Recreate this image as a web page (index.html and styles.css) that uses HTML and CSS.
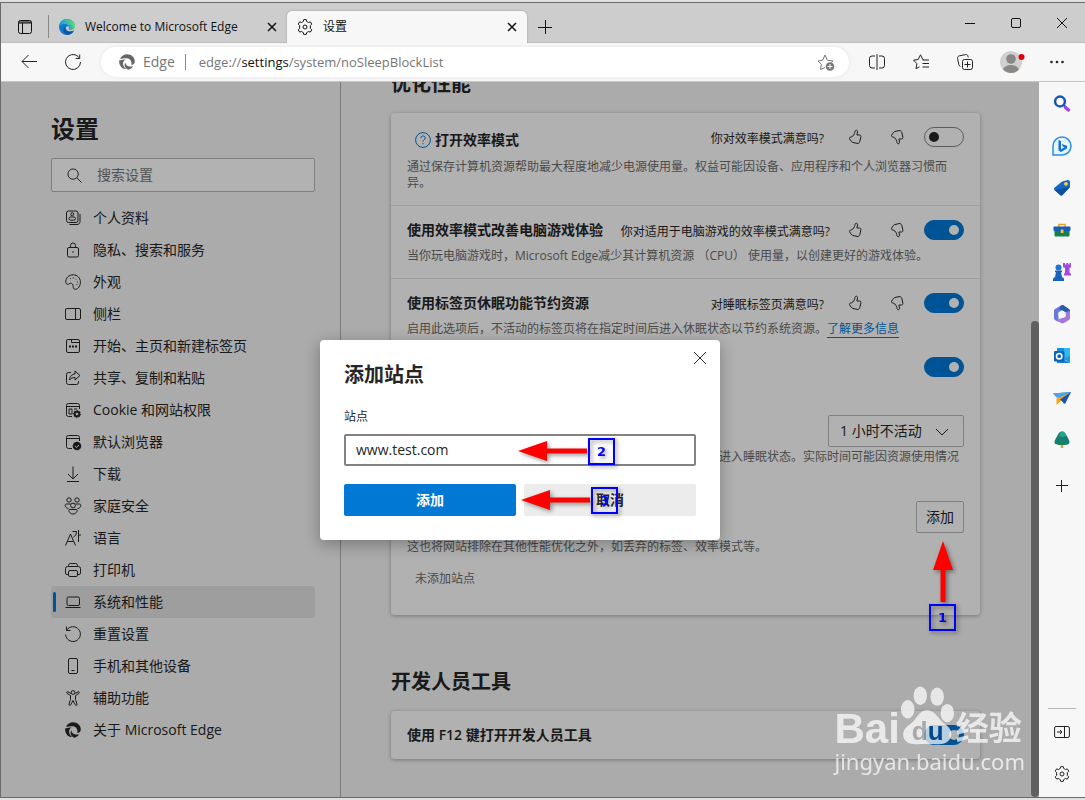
FILE: index.html
```html
<!DOCTYPE html>
<html lang="zh-CN">
<head>
    <meta charset="UTF-8">
    <meta name="viewport" content="width=device-width, initial-scale=1.0">
    <title>设置</title>
    <link rel="stylesheet" href="styles.css">
</head>
<body>
    <!-- 공통 아이콘 -->
    <svg class="defs" aria-hidden="true">
        <symbol id="gear" viewBox="0 0 16 16">
            <path d="M6.7.7q1.300-.3 2.600 0l.5 1.900q.9.300 1.600.9l1.900-.6q.9 1 1.400 2.300L13.300 6.600q.2 1.400 0 2.800l1.400 1.400q-.5 1.300-1.400 2.300l-1.900-.6q-.7.6-1.600.9l-.5 1.900q-1.300.3-2.600 0l-.5-1.900q-.9-.3-1.600-.9l-1.900.6q-.9-1-1.400-2.300l1.400-1.400q-.2-1.400 0-2.800L1.300 5.200q.5-1.300 1.400-2.300l1.900.6q.7-.6 1.600-.9z"/>
            <circle cx="8" cy="8" r="2"/>
        </symbol>
        <symbol id="swirl" viewBox="0 0 16 16">
            <path fill="currentColor" stroke="none" d="M1 4.800C2.500 1.800 5.200.2 8 .2c4.600 0 8 3.500 7.800 7.300-.1 2-1.500 3.400-3.500 3.500.9-2.900-.8-6.400-4.500-6.800C5.200 3.900 2.700 5 1 4.800z"/>
            <path fill="currentColor" stroke="none" d="M.3 6.200c1.800.5 4-.8 6.300-.6C4.100 7 3.500 9.700 4.600 12c.6 1.300 1.500 2.200 2.500 3.100C2.900 15.200-.6 10.700.3 6.200z"/>
            <path fill="currentColor" stroke="none" d="M6.500 8.300c-.3 2.700 2.600 5 7.800 4-1.400 2-3 3-4.900 3.500-3.500-1.300-4.900-5.200-2.900-7.500z"/>
        </symbol>
        <symbol id="thumb" viewBox="0 0 16 16">
            <path d="M9.200 1.200c.9 0 1.500.8 1.300 1.800L9.900 6h2.600c1 0 1.600.8 1.400 1.700l-1.100 4.900c-.3 1.300-1.500 2.100-2.800 1.800l-4.300-1c-.6-.1-1-.5-1.300-1l-1.700-2.400c-.5-.8-.2-1.700.8-1.900 2-.3 3.100-1.700 3.900-3.400.6-1.300.5-3.500 1.800-3.500z"/>
        </symbol>
    </svg>

    <div class="window">
        <header class="tabbar">
            <button class="tool tabs-menu" aria-label="标签页操作"><svg viewBox="0 0 16 16"><rect x="1.5" y="1.5" width="13" height="13" rx="2"/><path d="M1.5 3h13M2 4h12M5.5 4v10"/></svg></button>
            <div class="tab">
                <svg class="tab-icon edge" viewBox="0 0 16 16">
                    <defs>
                        <linearGradient id="ea" x1="0" y1="0" x2="1" y2="0"><stop offset="0" stop-color="#159ce0"/><stop offset="1" stop-color="#62dd6a"/></linearGradient>
                    </defs>
                    <circle cx="8" cy="8" r="8" fill="#1277cf"/>
                    <path fill="url(#ea)" d="M.4 7C1 2.800 4 0 8 0c4.500 0 8 3.200 8 7 0 2.500-1.800 3.900-4 3.900-1.700 0-3-.6-2.300-1.500C11 7.500 9 4.900 6 4.900 3.500 4.900 1.500 5.700.4 7z"/>
                    <path fill="#0c55a0" d="M5.900 7.500c-1.200 3.400 2.600 6.300 8.800 4.600-1.200 2-3.200 3.400-5.600 3.800-4.500-.4-6.300-5.700-3.200-8.400z"/>
                    <path fill="#cdcdcd" d="M8.400 7.200c-2.400.8-1.800 4.800 2.300 5 2 .1 3.500-.4 5-1.200-.7 1.700-1.600 3-2.900 4L16 16V9.500z"/>
                    <path fill="url(#ea)" d="M9.500 5.200 16 7c0 2.500-1.800 3.900-4 3.900-1.700 0-3-.6-2.300-1.500.9-1.300.7-2.800-.2-4.200z"/>
                </svg>
                <span>Welcome to Microsoft Edge</span>
                <button class="tab-close" aria-label="关闭"><svg viewBox="0 0 10 10"><path d="M1 1l8 8M9 1L1 9"/></svg></button>
            </div>
            <div class="tab active">
                <svg class="tab-icon" viewBox="0 0 16 16"><use href="#gear"/></svg>
                <span>设置</span>
                <button class="tab-close" aria-label="关闭"><svg viewBox="0 0 10 10"><path d="M1 1l8 8M9 1L1 9"/></svg></button>
            </div>
            <button class="tool new-tab" aria-label="新建标签页"><svg viewBox="0 0 14 14"><path d="M7.500 0v14M0 7.500h14"/></svg></button>
            <div class="win-buttons">
                <button aria-label="最小化"><svg viewBox="0 0 10 10"><path d="M0 5.500h10"/></svg></button>
                <button aria-label="最大化"><svg viewBox="0 0 10 10"><rect x=".5" y=".5" width="9" height="9" rx="1.5"/></svg></button>
                <button aria-label="关闭窗口"><svg viewBox="0 0 10 10"><path d="M0 0l10 10M10 0L0 10"/></svg></button>
            </div>
        </header>

        <div class="toolbar">
            <button class="tool" aria-label="返回"><svg viewBox="0 0 16 16"><path d="M16 7.500H1M7.500 1L1 7.500 7.500 14"/></svg></button>
            <button class="tool" aria-label="刷新"><svg viewBox="0 0 16 16"><path d="M15.500 8A7.500 7.500 0 1 1 13 2.400l1.500 1.800M14.700.5v4h-4"/></svg></button>
            <div class="address">
                <svg class="swirl" viewBox="0 0 16 16"><use href="#swirl"/></svg>
                <span class="site">Edge</span>
                <div class="url" role="textbox" contenteditable="true" aria-label="地址栏">edge://<b>settings</b>/system/noSleepBlockList</div>
                <button class="star" aria-label="收藏"><svg viewBox="0 0 18 18"><path d="M8 14.500l-4.500 2 .9-5L1 8l4.600-.8L8 2l2.300 5.200 5.700.8-1.500 1.500"/><circle class="fill" cx="13" cy="13.500" r="4.300"/><path class="white" d="M13 11v5M10.500 13.500h5"/></svg></button>
            </div>
            <div class="actions">
                <button class="tool" aria-label="拆分窗口"><svg viewBox="0 0 16 16"><path d="M6 2H3A2.500 2.500 0 0 0 .5 4.500v7A2.500 2.500 0 0 0 3 14h3M10 2h3a2.500 2.500 0 0 1 2.500 2.500v7A2.500 2.500 0 0 1 13 14h-3M8 0v16"/></svg></button>
                <button class="tool" aria-label="收藏夹"><svg viewBox="0 0 16 16"><path d="M10.500 5.500H9.800L7.500.8 5.200 5.500.5 6.200l3.400 3.500-.9 5 3.500-1.900M9.500 6h6.500M9.500 9.500H16M9.500 13H16"/></svg></button>
                <button class="tool" aria-label="集锦"><svg viewBox="0 0 16 16"><rect x="5.5" y="5.5" width="10" height="10" rx="2"/><path d="M10.500 7.500v6M7.500 10.500h6M3.500 12.500C2.500 12 2 11.500 1.800 10.500L.6 4.500C.4 3 1 2 2.500 1.800l6-1.200c1.400-.2 2.300.5 2.500 1.900l.2 1"/></svg></button>
                <button class="tool profile" aria-label="个人资料"><svg viewBox="0 0 24 24"><circle cx="12" cy="12" r="11" fill="#d2d0ce"/><circle cx="12" cy="9" r="4.800" fill="#8a8886"/><path d="M4 19.500c2-6 14-6 16 0a11 11 0 0 1-16 0z" fill="#8a8886"/><circle cx="22.500" cy="7" r="3" fill="#e3000b"/></svg></button>
                <button class="tool dots" aria-label="设置及其他"><svg viewBox="0 0 16 16"><circle cx="2.500" cy="8" r="1.300"/><circle cx="8" cy="8" r="1.300"/><circle cx="13.500" cy="8" r="1.300"/></svg></button>
            </div>
        </div>

        <div class="workspace">
            <div class="page">
                <aside class="menu">
                    <h1>设置</h1>
                    <label class="search">
                        <svg viewBox="0 0 16 16"><circle cx="6.500" cy="6.500" r="5.500"/><path d="M10.500 10.500l5 5"/></svg>
                        <input type="search" placeholder="搜索设置" aria-label="搜索设置">
                    </label>
                    <nav>
                        <a href="#"><svg viewBox="0 0 16 16"><rect x="1.5" y="1" width="11.500" height="11.500" rx="2"/><circle cx="7.200" cy="4.300" r="1.500"/><rect x="4" y="7" width="6.500" height="3.200" rx="1.500"/><path d="M15 4v7.500c0 2-1.200 3-3 3H4.500"/></svg>个人资料</a>
                        <a href="#"><svg viewBox="0 0 16 16"><rect x="2.500" y="5.500" width="11" height="9.500" rx="1.500"/><path d="M5.500 5.500v-2a2.500 2.500 0 0 1 5 0v2"/><circle class="fill" cx="8" cy="10" r=".8"/></svg>隐私、搜索和服务</a>
                        <a href="#"><svg viewBox="0 0 16 16"><path d="M.8 8.500C.3 4 4 .8 8.200.8c4 0 7 3 7.200 6.900.2 4-2.200 7.700-5 7.500-3.300-.3-1.400-3-3-5.200-1.500-2-3.500.7-5.200.2-.8-.2-1.300-.8-1.400-1.700z"/><path stroke-dasharray="1 2" d="M5 5c2-2 5-1.500 6.500 1s1 4-.5 6"/></svg>外观</a>
                        <a href="#"><svg viewBox="0 0 16 16"><rect x=".5" y="2.500" width="15" height="11" rx="1.500"/><path d="M10.500 2.500v11"/></svg>侧栏</a>
                        <a href="#"><svg viewBox="0 0 16 16"><rect x="1.500" y="1.500" width="13" height="13" rx="1.500"/><path d="M6.500 1.500v3h8"/><path stroke-width="2" d="M4 8.500h2M7 8.500h2M10 8.500h2"/></svg>开始、主页和新建标签页</a>
                        <a href="#"><svg viewBox="0 0 16 16"><path d="M6 2.500H3.500a2 2 0 0 0-2 2v8a2 2 0 0 0 2 2h8a2 2 0 0 0 2-2V11"/><path d="M10 1l5 4.500-5 4.500V7.500c-2.500 0-4 .5-5.500 2.500.3-3.500 2.500-6 5.500-6z"/></svg>共享、复制和粘贴</a>
                        <a href="#"><svg viewBox="0 0 16 16"><path d="M7 14.500H3.500a2 2 0 0 1-2-2v-9a2 2 0 0 1 2-2h9a2 2 0 0 1 2 2V7M1.500 4.500h13M7 7H4v5h3zM9 7h3"/><circle cx="12" cy="12" r="2.300" stroke-width="2"/><path stroke-dasharray="1.300 1.400" d="M12 8.300a3.700 3.700 0 1 1-.1 0"/></svg>Cookie 和网站权限</a>
                        <a href="#"><svg viewBox="0 0 16 16"><path d="M7 14.500H3.500a2 2 0 0 1-2-2v-9a2 2 0 0 1 2-2h9a2 2 0 0 1 2 2V7M1.500 4.500h13"/><circle class="fill" cx="12" cy="12" r="4.300"/><path class="cut" d="M10 12l1.500 1.500L14 11"/></svg>默认浏览器</a>
                        <a href="#"><svg viewBox="0 0 16 16"><path d="M8 .5v12M3 8l5 5 5-5M2 15.500h12"/></svg>下载</a>
                        <a href="#"><svg viewBox="0 0 16 16"><circle cx="4" cy="2" r="2.200"/><circle cx="12" cy="2" r="2.200"/><circle cx="8" cy="7.500" r="2.400"/><path d="M5.500 6H1.500c-2.500 0-1.500 4.500 2 4.500M10.500 6h4c2.500 0 1.500 4.500-2 4.500M4.500 11.500h7c1.500 0 .5 4.500-3.500 4.500s-5-4.500-3.500-4.500z"/></svg>家庭安全</a>
                        <a href="#"><svg viewBox="0 0 16 16"><path d="M.5 15.500L5.500 4l5 11.500M2.500 11.500h6M7.500 1.500h4c0 3-1 4.500-3 5.500M13.500 0v12M13.500 5H16"/></svg>语言</a>
                        <a href="#"><svg viewBox="0 0 16 16"><path d="M3.500 4.500v-1a2 2 0 0 1 2-2h5a2 2 0 0 1 2 2v1M3.500 12.500H2A1.500 1.500 0 0 1 .5 11V6.500a2 2 0 0 1 2-2h11a2 2 0 0 1 2 2V11a1.500 1.500 0 0 1-1.500 1.500h-1.500"/><rect x="3.500" y="8.500" width="9" height="6" rx="1.500"/></svg>打印机</a>
                        <a href="#" class="active"><svg viewBox="0 0 16 16"><rect x="2" y="3" width="12.500" height="8.500" rx="1.500"/><path d="M.5 13.500h15"/></svg>系统和性能</a>
                        <a href="#"><svg viewBox="0 0 16 16"><path d="M1.500.5v4h4M1.700 4.200A7.400 7.400 0 1 1 .6 8.500"/></svg>重置设置</a>
                        <a href="#"><svg viewBox="0 0 16 16"><rect x="3.500" y=".5" width="9" height="15" rx="1.500"/><path d="M6.500 12.500h3"/></svg>手机和其他设备</a>
                        <a href="#"><svg viewBox="0 0 16 16"><circle cx="8" cy="2.500" r="1.900"/><path d="M6 3.500L3 1.800c-1.200-.5-2 1-.8 1.700l3.300 2v4L4 14c-.3 1.500 1.300 2 1.800.7L8 10.500l2.200 4.200c.5 1.300 2.100.8 1.800-.7l-1.500-4.500v-4l3.300-2c1.200-.7.4-2.200-.8-1.700l-3 1.700"/></svg>辅助功能</a>
                        <a href="#"><svg viewBox="0 0 16 16"><use href="#swirl"/></svg>关于 Microsoft Edge</a>
                    </nav>
                </aside>

                <main class="content">
                    <h2>优化性能</h2>
                    <section class="card">
                        <div class="row">
                            <div class="head">
                                <label class="title help" for="eco"><svg viewBox="0 0 16 16"><circle cx="8" cy="8" r="7.400"/><path d="M5.800 6.200c0-3 4.400-2.900 4.400-.2C10.200 7.800 8 7.800 8 9.700"/><path d="M8 11v1.300"/></svg>打开效率模式</label>
                                <span class="ask">你对效率模式满意吗?</span>
                                <button class="vote" aria-label="满意"><svg><use href="#thumb"/></svg></button>
                                <button class="vote down" aria-label="不满意"><svg><use href="#thumb"/></svg></button>
                                <input type="checkbox" class="toggle" id="eco">
                            </div>
                            <p>通过保存计算机资源帮助最大程度地减少电源使用量。权益可能因设备、应用程序和个人浏览器习惯而异。</p>
                        </div>
                        <div class="row">
                            <div class="head">
                                <label class="title" for="game">使用效率模式改善电脑游戏体验</label>
                                <span class="ask near">你对适用于电脑游戏的效率模式满意吗?</span>
                                <button class="vote" aria-label="满意"><svg><use href="#thumb"/></svg></button>
                                <button class="vote down" aria-label="不满意"><svg><use href="#thumb"/></svg></button>
                                <input type="checkbox" class="toggle" id="game" checked>
                            </div>
                            <p>当你玩电脑游戏时，Microsoft Edge减少其计算机资源 （CPU） 使用量，以创建更好的游戏体验。</p>
                        </div>
                        <div class="row">
                            <div class="head">
                                <label class="title" for="sleep">使用标签页休眠功能节约资源</label>
                                <span class="ask">对睡眠标签页满意吗?</span>
                                <button class="vote" aria-label="满意"><svg><use href="#thumb"/></svg></button>
                                <button class="vote down" aria-label="不满意"><svg><use href="#thumb"/></svg></button>
                                <input type="checkbox" class="toggle" id="sleep" checked>
                            </div>
                            <p>启用此选项后，不活动的标签页将在指定时间后进入休眠状态以节约系统资源。<a href="#">了解更多信息</a></p>

                            <div class="head sub">
                                <label class="title" for="fade">淡化睡眠标签页</label>
                                <input type="checkbox" class="toggle" id="fade" checked>
                            </div>
                            <p>标签页进入睡眠状态时将显示为淡出。</p>

                            <div class="head time">
                                <label class="title" for="time">在此时间后将不活动的标签页置于睡眠状态</label>
                                <span class="select">
                                    <select id="time"><option>1 小时不活动</option></select>
                                    <svg viewBox="0 0 12 8"><path d="M0 1l6 6 6-6"/></svg>
                                </span>
                            </div>
                            <p class="tight">在经过此时间量后，不活动的标签页将在指定时间过去之后进入睡眠状态。实际时间可能因资源使用情况而异。</p>

                            <div class="head sub">
                                <span class="title">从不将这些站点置于睡眠状态</span>
                                <button class="add">添加</button>
                            </div>
                            <p class="mid">这也将网站排除在其他性能优化之外，如丢弃的标签、效率模式等。</p>
                            <p class="empty">未添加站点</p>
                        </div>
                    </section>

                    <h2 class="second">开发人员工具</h2>
                    <section class="card">
                        <div class="row">
                            <div class="head">
                                <label class="title" for="f12">使用 F12 键打开开发人员工具</label>
                                <input type="checkbox" class="toggle" id="f12" checked>
                            </div>
                        </div>
                    </section>
                </main>

                <div class="scrollbar"></div>

                <div class="overlay">
                    <form class="dialog" role="dialog" aria-labelledby="dialog-title">
                        <button type="button" class="dialog-close" aria-label="关闭"><svg viewBox="0 0 12 12"><path d="M0 0l12 12M12 0L0 12"/></svg></button>
                        <h2 id="dialog-title">添加站点</h2>
                        <label for="site">站点</label>
                        <input type="text" id="site" value="www.test.com">
                        <div class="dialog-buttons">
                            <button type="button" class="primary">添加</button>
                            <button type="button">取消</button>
                        </div>
                        <div class="mark mark2"><svg class="arrow" viewBox="0 0 70 22"><path d="M0 11L29 1v7.500h40v5H29V21z"/></svg><b>2</b></div>
                        <div class="mark mark3"><svg class="arrow" viewBox="0 0 70 22"><path d="M0 11L29 1v7.500h40v5H29V21z"/></svg><b>3</b></div>
                    </form>
                </div>

                <div class="mark mark1"><svg class="arrow" viewBox="0 0 22 63"><path d="M11 0l10 29h-7.500v32h-5V29H1z"/></svg><b>1</b></div>

                <div class="watermark">
                    <div class="brand">
                        <span class="bai">Bai</span>
                        <span class="paw">
                            <svg viewBox="0 0 58 62"><ellipse cx="8" cy="24" rx="7" ry="9.500"/><ellipse cx="21" cy="10" rx="7" ry="9.500"/><ellipse cx="38.500" cy="11" rx="7" ry="9.500"/><ellipse cx="49" cy="28" rx="7" ry="9.500"/><path d="M28 25c9 0 11 9 18 14 7 5 9 10 6 15-4 8-13 6-24 6S8 62 4 54c-2-7 1-11 7-15 7-5 8-14 17-14z"/></svg>
                            <i>d<em>u</em></i>
                        </span>
                        <span class="exp">经验</span>
                    </div>
                    <div class="domain">jingyan.baidu.com</div>
                </div>
            </div>

            <aside class="apps">
                <button aria-label="搜索"><svg viewBox="0 0 20 20"><circle cx="8" cy="7.500" r="4.900" fill="none" stroke="#1554ba" stroke-width="2.500"/><path d="M12 11.500l2 1.800" stroke="#1554ba" stroke-width="2"/><path d="M13.500 13.500l3 2.500" stroke="#a444e8" stroke-width="3.500" stroke-linecap="round"/></svg></button>
                <button aria-label="必应"><svg viewBox="0 0 20 20"><path d="M1 19v-9a9 9 0 1 1 9 9z" fill="#e4f6ff" stroke="#2d8de0" stroke-width="1.500"/><path d="M6.500 4l2.500.9v8.300l3.500-1.900-1.700-.8-1-2.600 5.200 1.900v2.700l-6 3.500-2.500-1.500z" fill="#1672d8"/></svg></button>
                <button aria-label="购物"><svg viewBox="0 0 20 20"><path d="M10 3.500L16 2c1 0 2 .8 2 2v5l-7.500 8c-.8.8-1.600.8-2.400 0L2.500 12c-.7-.8-.7-1.500 0-2.200z" fill="#1269c7"/><path d="M2.500 12L18 9l-7.500 8c-.8.8-1.600.8-2.400 0z" fill="#0e4f9e"/><circle cx="14" cy="5.800" r="1.900" fill="#ffd43b"/></svg></button>
                <button aria-label="工具"><svg viewBox="0 0 20 20"><path d="M7 7V4.500h6V7" fill="none" stroke="#e8a41b" stroke-width="1.500"/><rect x="1.500" y="6.500" width="17" height="4.500" rx="1" fill="#155dbb"/><path d="M2.500 11h15v4.500a1 1 0 0 1-1 1h-13a1 1 0 0 1-1-1z" fill="#16804f"/><rect x="8.800" y="9.500" width="2.600" height="3.500" fill="#ffc83d"/></svg></button>
                <button aria-label="游戏"><svg viewBox="0 0 20 20"><circle cx="6.500" cy="5.500" r="3" fill="#1f75d4"/><path d="M3 8.500h7v1.700H9l1 4.800 2 1.500V19H1v-2.500L3 15l1-4.800H3z" fill="#1763ba"/><path d="M11 1h2v1.500h1.300V1h2v1.500h1.200V1H19v4l-1.500 1v4.500L19 12v1.500h-7V12l1-1.500V6l-2-1z" fill="#a24ae3"/></svg></button>
                <button aria-label="Microsoft 365"><svg viewBox="0 0 20 20"><path d="M9 1.500L3 5c-.7.500-1 1-1 2v7c0 1 .3 1.500 1 2l3.500 2V9L12 6z" fill="#697bd8"/><path d="M9 1.500c1-.6 2-.6 3 0L17 5c.7.500 1 1 1 2v4l-4.500-2.500L7 5z" fill="#275cad"/><path d="M18 7v7c0 1-.3 1.500-1 2l-5 3c-1 .6-2 .6-3 0l-5-3 9.500-3V8z" fill="#a577df"/><path d="M10 6.300l3.500 2v3.800L10 14l-3.500-2V8.300z" fill="#f7f7f7"/></svg></button>
                <button aria-label="Outlook"><svg viewBox="0 0 20 20"><path d="M5 2h13v11H5z" fill="#35b8f1"/><path d="M5 2h7v6H5z" fill="#1490df"/><path d="M5 9l13 8V9.500L12 13z" fill="#1b9de2"/><path d="M5 10v7h13z" fill="#1482d0"/><rect x="2" y="5" width="10.500" height="10.500" rx="1" fill="#0c64b8"/><circle cx="7.200" cy="10.200" r="2.700" fill="none" stroke="#fff" stroke-width="1.600"/></svg></button>
                <button aria-label="Drop"><svg viewBox="0 0 20 20"><path d="M1 5.500L19 4l-7 12-3-5z" fill="#2383dc"/><path d="M19 4L4.500 10.500V17z" fill="#f5a623"/><path d="M19 4L8 11.500l5 4.500z" fill="#1457ac"/><path d="M1 5.500L19 4 5 10z" fill="#4ba5ee"/></svg></button>
                <button aria-label="树"><svg viewBox="0 0 20 20"><path d="M8.800 14h2.500v4H8.800z" fill="#eaa11f"/><path d="M10 1.500c2.500 0 3.500 2 4.500 4s3 4.500 3 6.500c0 3-3.500 3-7.500 3s-7.500 0-7.500-3c0-2 2-4.500 3-6.500s2-4 4.500-4z" fill="#17806d"/><path d="M10 1.500c2.500 0 3.500 2 4.500 4-2 1.500-5 1.500-7 1 0-2 1-5 2.500-5z" fill="#27a58c"/></svg></button>
                <button class="line more" aria-label="自定义"><svg viewBox="0 0 12 12"><path d="M5.500 0v12M0 5.500h12"/></svg></button>
                <div class="bottom">
                    <button class="line" aria-label="隐藏侧栏"><svg viewBox="0 0 16 16"><rect x=".6" y="2.500" width="14.800" height="11" rx="1.500"/><path d="M10.500 2.500v11M3 8h5M6 6l2 2-2 2"/></svg></button>
                    <button class="line" aria-label="设置"><svg viewBox="0 0 16 16"><use href="#gear"/></svg></button>
                </div>
            </aside>
        </div>
    </div>
</body>
</html>
```

FILE: styles.css
```css
* {box-sizing:border-box;}
body {
    margin:0; padding:2px 0;
    height:100vh;
    background:#e0e1dd;
    font-family:"Open Sans", "Noto Sans CJK SC", sans-serif;
    font-size:14px; line-height:20px;
    color:#262626;
}
h1, h2, p {margin:0;}
button {
    border:0; padding:0;
    background:none; color:inherit;
    font:inherit;
}
input, select {font:inherit; color:inherit;}
svg {
    display:block;
    fill:none; stroke:currentColor;
    overflow:visible;
}
.fill {fill:currentColor; stroke:none;}
.defs {position:absolute; width:0; height:0;}
.window {
    height:100%;
    display:flex; flex-direction:column;
    border:1px solid #6b6b6b; border-right:0;
}

/* 탭 */
.tabbar {
    height:40px; flex:none;
    display:flex; align-items:flex-end;
    background:#cdcdcd;
    border-bottom:1px solid #bdbdbd;
    color:#111;
}
.tool {
    width:44px; height:30px;
    display:flex; align-items:center; justify-content:center;
    flex:none;
}
.tool svg {width:16px; height:16px;}
.tabs-menu {width:47px;}
.tab {
    width:239px; height:31px;
    display:flex; align-items:center;
    gap:10px; padding:0 10px;
    font-size:12px;
}
.tab:nth-child(2) {border-left:1px solid transparent; border-image:linear-gradient(transparent 5px, #888 5px, #888 26px, transparent 26px) 1;}
.tab.active {
    width:240px; height:32px;
    margin-bottom:-1px;
    background:#f7f7f7;
    border-radius:5px 5px 0 0;
    box-shadow:0 0 2px rgba(0,0,0,.3);
    clip-path:inset(-3px -3px 0 -3px);
}
.tab span {flex:1; white-space:nowrap;}
.tab-icon {width:16px; height:16px; flex:none;}
.edge {stroke:none;}
.tab-close svg {width:10px; height:10px; stroke-width:1.5;}
.new-tab {width:36px;}
.tool.new-tab svg {width:14px; height:14px;}
.win-buttons {
    margin-left:auto; align-self:flex-start;
    display:flex;
}
.win-buttons button {
    width:46px; height:40px;
    display:flex; align-items:center; justify-content:center;
}
.win-buttons svg {width:10px; height:10px;}

/* 주소창 */
.toolbar {
    height:39px; flex:none;
    display:flex; align-items:center;
    padding-left:6px;
    background:#f7f7f7;
    border-bottom:1px solid #c4c4c4;
    color:#222;
}
.address {
    flex:1; height:30px;
    display:flex; align-items:center;
    margin-left:6px; padding:0 14px 0 18px;
    background:#fff; border-radius:15px;
    box-shadow:0 0 4px rgba(0,0,0,.08);
    color:#767676;
}
.swirl {width:16px; height:16px; color:#666;}
.site {
    margin-left:8px; padding-right:10px;
    border-right:1px solid #888;
    line-height:16px;
}
.url {
    flex:1; margin-left:13px;
    font-size:13px;
    outline:0; white-space:nowrap;
}
.url b {font-weight:400; color:#111;}
.star svg {width:18px; height:18px;}
.star .white {stroke:#fff;}
.actions {display:flex; margin-left:6px; padding-right:6px;}
.profile {width:48px;}
.tool.profile svg {width:24px; height:24px; stroke:none;}
.dots svg {fill:currentColor; stroke:none;}

.workspace {flex:1; min-height:0; display:flex;}
.page {
    flex:1; min-width:0;
    position:relative; overflow:hidden;
    display:flex;
    background:#f5f5f5;
}

/* 왼쪽 메뉴 */
.menu {
    width:340px; flex:none;
    padding:31px 25px 0 50px;
    border-right:1px solid #b0b0b0;
}
.menu h1 {font-size:24px; line-height:32px;}
.search {
    height:34px; margin:13px 0 10px;
    display:flex; align-items:center;
    gap:15px; padding:0 15px;
    background:#fff;
    border:1px solid #b8b8b8; border-radius:2px;
}
.search svg {width:15px; height:15px; flex:none;}
.search input {
    flex:1; min-width:0;
    border:0; outline:0; padding:0;
    background:none;
}
.search input::placeholder {color:#767676;}
.menu nav a {
    position:relative;
    height:32px;
    display:flex; align-items:center;
    gap:12px; padding-left:14px;
    border-radius:2px;
    color:inherit; text-decoration:none;
}
.menu nav svg {width:16px; height:16px;}
.menu nav .cut {stroke:#f5f5f5;}
.menu nav .active {background:#e3e3e3;}
.menu nav .active::before {
    content:"";
    position:absolute; left:2px; top:6px;
    width:3px; height:20px;
    border-radius:2px;
    background:#0078d4;
}

/* 설정 내용 */
.content {
    flex:1; min-width:0;
    margin-top:-13px; /* 스크롤된 위치 */
    padding:0 59px 0 50px;
}
h2 {font-size:20px; line-height:30px;}
.second {margin-top:52px;}
.card {
    margin-top:14px;
    background:#fefefe;
    border-radius:4px;
    box-shadow:0 1px 4px rgba(0,0,0,.3);
}
.row {padding:14px 16px;}
.row + .row {border-top:1px solid #e2e2e2;}
.head {display:flex; align-items:flex-start; line-height:20px;}
.title {flex:1; font-weight:600; white-space:nowrap;}
.help {
    display:flex; align-items:center;
    gap:4px; height:24px;
    padding:2px 0 0 8px;
}
.help svg {width:16px; height:16px; color:#0078d4;}
.ask {
    margin-right:16px;
    font-size:12px; line-height:24px;
    height:20px;
    white-space:nowrap;
}
.near {margin-right:10px;}
.vote {
    width:30px; height:20px;
    margin-right:12px;
    display:flex; align-items:center; justify-content:center;
}
.vote svg {width:16px; height:16px;}
.down svg {transform:scaleY(-1);}
.toggle {
    appearance:none;
    width:40px; height:20px;
    margin:0; padding:4px;
    display:flex; flex:none;
    border:1px solid #838383; border-radius:10px;
}
.toggle::before {
    content:"";
    width:10px; height:10px;
    border-radius:50%;
    background:#262626;
}
.toggle:checked {
    justify-content:flex-end;
    background:#0078d4; border-color:#0078d4;
}
.toggle:checked::before {background:#fefefe;}
.row p {
    margin-top:8px;
    font-size:12px; line-height:16px;
    color:#6b6b6b;
}
.row p a {
    color:#0078d4; text-decoration:none;
    border-bottom:1px solid #0078d4;
}
.row .sub {margin-top:20px;}
.row .time {margin-top:14px;}
.row .tight {margin-top:2px;}
.row .mid {margin-top:6px;}
.row .empty {margin:16px 0 14px 8px;}
.select {position:relative;}
.select select {
    appearance:none;
    width:136px; height:32px;
    padding:0 11px;
    background:none;
    border:1px solid #b8b8b8; border-radius:2px;
}
.select svg {
    position:absolute; right:16px; top:13px;
    width:12px; height:8px;
    pointer-events:none;
}
.add {
    width:48px; height:32px;
    border:1px solid #b8b8b8; border-radius:2px;
}
.scrollbar {
    position:absolute; right:0; top:239px; bottom:0;
    width:8px;
    border-radius:4px;
    background:#8a8a8a;
}

/* 팝업 */
.overlay {
    position:absolute; inset:0;
    display:flex; align-items:center; justify-content:center;
    background:rgba(0,0,0,.3);
}
.dialog {
    position:relative;
    width:400px;
    padding:20px 24px 24px;
    background:#fff; border-radius:4px;
    box-shadow:0 4px 16px rgba(0,0,0,.3);
}
.dialog label {
    display:block;
    margin:19px 0 9px;
    font-size:12px; line-height:16px;
}
.dialog input {
    display:block;
    width:100%; height:32px;
    padding:0 10px;
    border:2px solid #838383; border-radius:2px;
}
.dialog-close {position:absolute; right:14px; top:12px;}
.dialog-close svg {width:12px; height:12px;}
.dialog-buttons {display:flex; gap:8px; margin-top:18px;}
.dialog-buttons button {
    flex:1; height:32px;
    border-radius:2px;
    background:#ececec;
    font-weight:600;
}
.dialog-buttons .primary {background:#0078d4; color:#fff;}

/* 순서 표시 화살표 */
.mark {
    position:absolute;
    display:flex; align-items:center;
    filter:drop-shadow(2px 2px 2px rgba(0,0,0,.4));
    pointer-events:none;
}
.mark b {
    width:27px; height:27px;
    border:2px solid #00f;
    color:#00f;
    font:bold 13px/24px "DejaVu Sans", sans-serif;
    text-align:center;
}
.arrow {width:70px; height:22px; fill:#f00; stroke:none;}
.mark2 {left:198px; top:98px;}
.mark3 {left:201px; top:147px;}
.mark1 {right:83px; top:459px; flex-direction:column;}
.mark1 .arrow {width:22px; height:63px;}

.watermark {
    position:absolute; right:14px; bottom:22px;
    color:#fff; opacity:.72;
    font-family:"Noto Sans", "Noto Sans CJK SC", sans-serif;
    pointer-events:none;
}
.brand {display:flex; align-items:flex-end; height:62px;}
.bai {font:bold 42px/36px "Liberation Sans", sans-serif;}
.paw {position:relative;}
.paw svg {width:56px; height:62px; fill:currentColor; stroke:none;}
.paw i {
    position:absolute; left:12px; bottom:3px;
    color:#a6a6a6;
    font:bold 26px/26px "Liberation Sans", sans-serif;
}
.paw em {color:#004488; font-style:normal;}
.exp {font-size:33px; line-height:38px; font-weight:700;}
.domain {font-size:22px; line-height:28px;}

/* 오른쪽 앱 바 */
.apps {
    width:46px; flex:none;
    display:flex; flex-direction:column; align-items:center;
    padding-top:1px;
    background:#f7f7f7;
    color:#222;
}
.apps button {
    width:46px; height:42px;
    display:flex; align-items:center; justify-content:center;
}
.apps svg {width:20px; height:20px; stroke:none;}
.apps .line svg {width:16px; height:16px; stroke:currentColor;}
.apps .more {height:50px;}
.apps .more svg {width:12px; height:12px;}
.bottom {
    margin-top:auto;
    width:28px;
    display:flex; flex-direction:column; align-items:center;
    padding:2px 0;
    border-top:1px solid #b8b8b8;
}
```
